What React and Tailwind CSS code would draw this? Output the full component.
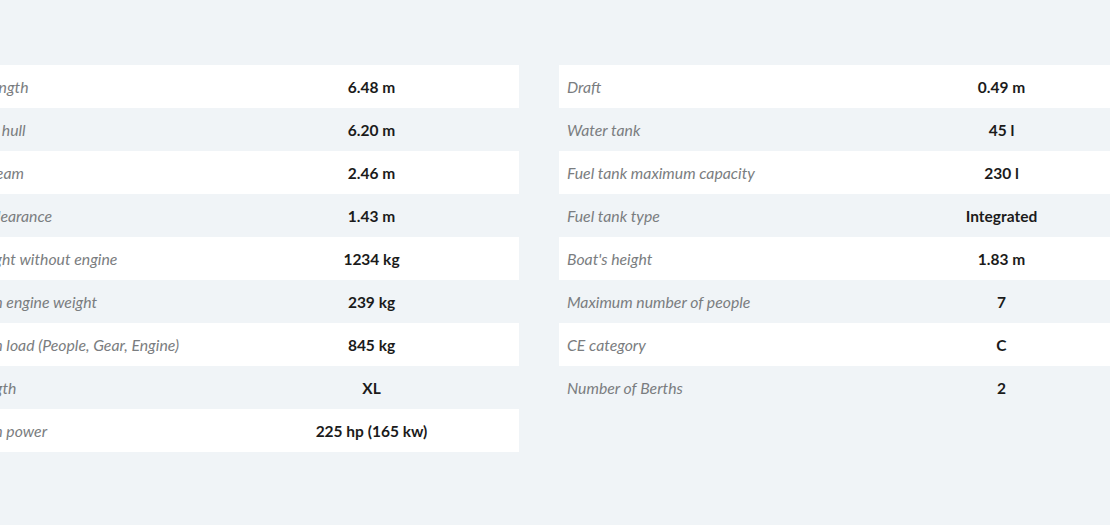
const leftSpecs = [
  { label: 'Overall length', value: '6.48 m' },
  { label: 'Length of hull', value: '6.20 m' },
  { label: 'Overall beam', value: '2.46 m' },
  { label: 'Ground clearance', value: '1.43 m' },
  { label: 'Boat weight without engine', value: '1234 kg' },
  { label: 'Maximum engine weight', value: '239 kg' },
  { label: 'Maximum load (People, Gear, Engine)', value: '845 kg' },
  { label: 'Shaft length', value: 'XL' },
  { label: 'Maximum power', value: '225 hp (165 kw)' },
];

const rightSpecs = [
  { label: 'Draft', value: '0.49 m' },
  { label: 'Water tank', value: '45 l' },
  { label: 'Fuel tank maximum capacity', value: '230 l' },
  { label: 'Fuel tank type', value: 'Integrated' },
  { label: "Boat's height", value: '1.83 m' },
  { label: 'Maximum number of people', value: '7' },
  { label: 'CE category', value: 'C' },
  { label: 'Number of Berths', value: '2' },
];

const SpecTable = ({ rows }) => (
  <div className="w-[590px] shrink-0">
    {rows.map((row, i) => (
      <div
        key={row.label}
        className={`grid grid-cols-2 h-[43px] items-center pt-px ${i % 2 === 0 ? 'bg-white' : 'bg-[#f0f4f7]'}`}
      >
        <span className="pl-2 italic text-[15.8px] text-[#7a7d80] whitespace-nowrap">{row.label}</span>
        <span className="text-center font-bold text-[15.5px] text-[#1b1b1b] pt-px">{row.value}</span>
      </div>
    ))}
  </div>
);

const App = () => {
  return (
    <div
      className="w-[1110px] h-[525px] overflow-hidden bg-[#f0f4f7] pt-[65px]"
      style={{ fontFamily: 'Lato, "Liberation Sans", sans-serif' }}
    >
      <div className="flex gap-10 ml-[-71px]">
        <SpecTable rows={leftSpecs} />
        <SpecTable rows={rightSpecs} />
      </div>
    </div>
  );
};

export default App;
